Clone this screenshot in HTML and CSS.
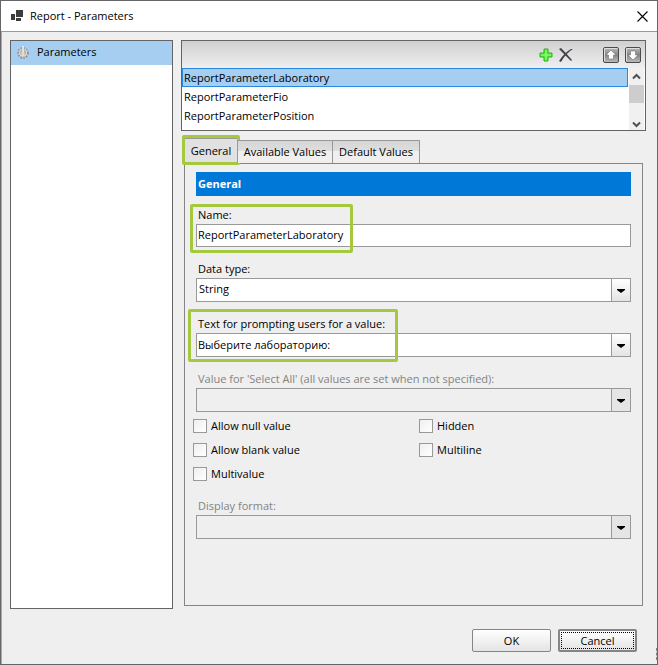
FILE: index.html
```html
<!DOCTYPE html>
<html lang="en">
<head>
<meta charset="utf-8">
<title>Report - Parameters</title>
<link rel="stylesheet" href="styles.css">
</head>
<body>
<div class="window">
  <header class="titlebar">
    <svg class="app-icon" width="14" height="12" viewBox="0 0 14 12" fill="#3c3c3c" aria-hidden="true"><path d="M0 4h4v6H0zM5 0h7v7H5zM5 8h5v3H5z"/></svg>
    <h1 class="title">Report - Parameters</h1>
    <button class="close" aria-label="Close"><svg width="11" height="11" viewBox="0 0 11 11" stroke="#000" stroke-width="1.1"><path d="M.5.5l10 10M10.5.5l-10 10"/></svg></button>
  </header>

  <main class="content">
    <nav class="sidebar">
      <a class="side-item" href="#parameters">
        <svg width="12" height="13" viewBox="0 0 12 13" aria-hidden="true"><circle cx="6" cy="7" r="4.8" fill="#c9c7c5" stroke="#92908e" stroke-width="2" stroke-dasharray="1.6 1.2"/><circle cx="6" cy="6.5" r="4" fill="#dedcda"/><path d="M6 1v6" stroke="#999" stroke-width="3"/><path d="M6 0v7" stroke="#fff" stroke-width="1.4"/><path d="M4 4.5Q2.500 7 4.500 9M8 4.500Q9.500 7 7.500 9" stroke="#aaa" fill="none"/></svg>
        <span>Parameters</span>
      </a>
    </nav>

    <div class="editor">
      <section class="list-panel">
        <div class="toolbar">
          <button class="tool" aria-label="Add"><svg width="14" height="14" viewBox="0 0 14 14"><path d="M5 1h4v4h4v4H9v4H5V9H1V5h4z" fill="#54f03c" stroke="#2fae24"/><path d="M7 2v10M2 7h10" stroke="#94ff76" stroke-width="1.200"/></svg></button>
          <button class="tool" aria-label="Delete"><svg width="14" height="14" viewBox="0 0 14 14" fill="#3f4245"><path d="M0 1l2-1q5 5 11 12l-1 1Q6 7 0 1zM12 1l2 0Q7 5 2 14l-2-1Q5 5 12 1z"/></svg></button>
          <button class="tool move-up" aria-label="Move up"><svg width="16" height="16" viewBox="0 0 16 16"><use href="#key"/><path d="M8 3l5 5h-2.500v4h-5V8H3z" fill="#fff" stroke="#777" stroke-width=".6"/></svg></button>
          <button class="tool" aria-label="Move down"><svg width="16" height="16" viewBox="0 0 16 16"><defs><linearGradient id="metal" x2="0" y2="1"><stop stop-color="#bbb"/><stop offset=".5" stop-color="#858585"/><stop offset="1" stop-color="#bdbdbd"/></linearGradient><g id="key"><rect x=".5" y=".5" width="15" height="15" rx="1.500" fill="url(#metal)" stroke="#4b4b4b"/><path d="M1.500 14V1.500h13" fill="none" stroke="#dedede"/></g></defs><use href="#key"/><path d="M8 13L3 8h2.500V4h5v4H13z" fill="#fff" stroke="#777" stroke-width=".6"/></svg></button>
        </div>
        <div class="list">
          <ul class="items" role="listbox" aria-label="Report parameters">
            <li class="item selected" role="option" aria-selected="true">ReportParameterLaboratory</li>
            <li class="item" role="option" aria-selected="false">ReportParameterFio</li>
            <li class="item" role="option" aria-selected="false">ReportParameterPosition</li>
          </ul>
          <div class="scrollbar">
            <button class="scroll-btn" aria-label="Scroll up"><svg width="9" height="7" viewBox="0 0 9 7" fill="none" stroke="#505050" stroke-width="2"><path d="M1 5.500l3.500-3.500L8 5.500"/></svg></button>
            <div class="thumb"></div>
            <button class="scroll-btn" aria-label="Scroll down"><svg width="9" height="7" viewBox="0 0 9 7" fill="none" stroke="#505050" stroke-width="2"><path d="M1 1.500L4.500 5 8 1.500"/></svg></button>
          </div>
        </div>
      </section>

      <div class="tabs" role="tablist">
        <button class="tab active" role="tab" aria-selected="true">General<span class="mark mark-tab"></span></button>
        <button class="tab tab-values" role="tab" aria-selected="false">Available Values</button>
        <button class="tab tab-defaults" role="tab" aria-selected="false">Default Values</button>
      </div>

      <section class="tab-panel" role="tabpanel">
        <h2 class="section-title">General</h2>

        <div class="field field-first">
          <label for="name">Name:</label>
          <input class="text" id="name" type="text" value="ReportParameterLaboratory">
          <span class="mark mark-name"></span>
        </div>

        <div class="field">
          <label for="type">Data type:</label>
          <div class="combo"><select id="type"><option>String</option></select></div>
        </div>

        <div class="field">
          <label for="prompt">Text for prompting users for a value:</label>
          <div class="combo"><input id="prompt" type="text" value="Выберите лабораторию:"></div>
          <span class="mark mark-prompt"></span>
        </div>

        <div class="field disabled">
          <label for="all">Value for 'Select All' (all values are set when not specified):</label>
          <div class="combo"><select id="all" disabled></select></div>
        </div>

        <div class="checks">
          <label class="check"><input type="checkbox">Allow null value</label>
          <label class="check"><input type="checkbox">Hidden</label>
          <label class="check"><input type="checkbox">Allow blank value</label>
          <label class="check"><input type="checkbox">Multiline</label>
          <label class="check"><input type="checkbox">Multivalue</label>
        </div>

        <div class="field disabled">
          <label for="format">Display format:</label>
          <div class="combo"><select id="format" disabled></select></div>
        </div>
      </section>
    </div>
  </main>

  <footer class="footer">
    <button class="btn">OK</button>
    <button class="btn focused">Cancel</button>
    <span class="grip"></span>
  </footer>
</div>
</body>
</html>
```
FILE: styles.css
```css
* { box-sizing: border-box; }

body {
  margin: 0;
  font: 11px/16px "Open Sans", "Noto Sans", sans-serif;
  color: #000;
}

button, input, select {
  font: inherit;
  color: inherit;
  margin: 0;
  padding: 0;
  border: 0;
  border-radius: 0;
  background: none;
  outline: 0;
}

.window {
  display: flex;
  flex-direction: column;
  min-height: 100vh;
  background: #efefef;
  border: 1px solid #66666a;
}

.titlebar {
  display: flex;
  align-items: center;
  height: 31px;
  padding: 0 9px 0 10px;
  background: #fff;
  border-bottom: 1px solid #999;
}

.title {
  flex: 1;
  margin: 0 0 0 5px;
  font-size: 11px;
  font-weight: 400;
}

.close, .tool { display: flex; }

.content {
  flex: 1;
  display: grid;
  grid-template-columns: 163px minmax(0, 1fr);
  gap: 8px;
  padding: 8px 11px 0 8px;
  border-left: 1px solid #aaa;
}

.sidebar {
  background: #fff;
  border: 1px solid #646464;
}

.side-item {
  display: flex;
  align-items: center;
  gap: 8px;
  height: 24px;
  padding: 0 6px 2px;
  background: #a5cef0;
  color: inherit;
  text-decoration: none;
}

.editor {
  display: flex;
  flex-direction: column;
  padding-bottom: 3px;
}

.list-panel {
  background: #fff;
  border: 1px solid #646464;
}

.toolbar {
  display: flex;
  align-items: center;
  justify-content: flex-end;
  gap: 6px;
  height: 27px;
  padding-right: 4px;
  background: linear-gradient(#d0d0d0, #efefef);
}

.move-up { margin-left: 24px; }

.list {
  display: flex;
  height: 62px;
  padding-right: 1px;
}

.items {
  flex: 1;
  margin: 0;
  padding: 0 1px 0 0;
  list-style: none;
}

.item {
  height: 19px;
  padding: 0 1px;
  border: 1px solid transparent;
  line-height: 18px;
}

.selected {
  background: #a5cef0;
  border-color: #2688de;
}

.scrollbar {
  display: flex;
  flex-direction: column;
  width: 15px;
  background: #f0f0f0;
}

.scroll-btn {
  display: flex;
  align-items: center;
  justify-content: center;
  height: 17px;
}

.thumb {
  height: 18px;
  margin-bottom: auto;
  background: #cdcdcd;
}

.scroll-btn:last-child { height: 12px; }

.tabs {
  display: flex;
  align-items: flex-end;
  padding: 7px 0 0 3px;
}

.tab {
  position: relative;
  height: 23px;
  margin-left: -1px;
  border: 1px solid #999;
  border-bottom: 0;
  background: linear-gradient(#d6d6d6, #dedede 45%, #efefef 46%, #efefef);
  text-align: center;
  white-space: nowrap;
}

.tab.active {
  width: 54px;
  height: 25px;
  margin-left: 0;
  background: #e1e1e1;
}

.tab-values { width: 96px; }
.tab-defaults { width: 88px; }

.tab-panel {
  flex: 1;
  margin: 0 3px;
  padding: 8px 11px;
  border: 1px solid #858585;
}

.section-title {
  margin: 0;
  padding: 0 2px;
  background: #0078d7;
  color: #fff;
  font-size: 11px;
  line-height: 24px;
}

.field {
  position: relative;
  margin-top: 13px;
}

.field-first { margin-top: 10px; }

.field label {
  display: block;
  padding-left: 2px;
  line-height: 18px;
}

.text, .combo {
  display: block;
  width: 100%;
  height: 24px;
  border: 1px solid #999;
  background: #fff;
}

.text {
  height: 23px;
  padding: 0 1px 3px;
}

.combo {
  position: relative;
  padding-right: 18px;
}

.combo select, .combo input {
  display: block;
  width: 100%;
  height: 22px;
  padding: 0 2px 2px;
  appearance: none;
}

.combo input { padding: 0 1px 2px; }

.combo::before {
  content: "";
  position: absolute;
  inset: 0 0 0 auto;
  width: 18px;
  border-left: 1px solid #999;
  background: linear-gradient(#fff, #e4e4e4);
  pointer-events: none;
}

.combo::after {
  content: "";
  position: absolute;
  right: 5px;
  top: 10px;
  width: 8px;
  height: 4px;
  background: #000;
  clip-path: polygon(0 0, 100% 0, 100% 25%, 50% 100%, 0 25%);
  pointer-events: none;
}

.disabled { color: #838383; }
.disabled .combo { background: #efefef; }
.disabled .combo::before { background: #e5e5e5; }

.checks {
  display: grid;
  grid-template-columns: 226px 1fr;
  margin: 2px 0 -2px -3px;
}

.check {
  display: flex;
  align-items: center;
  gap: 4px;
  height: 24px;
}

.check input {
  width: 14px;
  height: 14px;
  appearance: none;
  border: 1px solid #999;
  background: linear-gradient(135deg, #efefef, #fff);
}

.mark {
  position: absolute;
  border: 3px solid #a4c93f;
  border-radius: 2px;
  pointer-events: none;
}

.mark-tab { inset: -4px -3px -2px -3px; }
.mark-name { left: -6px; top: -2px; width: 163px; height: 49px; }
.mark-prompt { left: -8px; top: -6px; width: 210px; height: 53px; }

.footer {
  position: relative;
  display: flex;
  justify-content: flex-end;
  gap: 7px;
  padding: 20px 20px 12px;
  border-left: 1px solid #aaa;
}

.btn {
  width: 79px;
  height: 23px;
  border: 1px solid #858585;
  border-radius: 2px;
  background: linear-gradient(#fff, #e4e4e4);
  line-height: 20px;
}

.btn.focused {
  border-width: 2px;
  outline: 1px dotted #000;
  outline-offset: -4px;
  line-height: 16px;
}

.grip {
  position: absolute;
  right: 0;
  bottom: 4px;
  height: 12px;
  border-right: 1px dashed #858585;
}
```
